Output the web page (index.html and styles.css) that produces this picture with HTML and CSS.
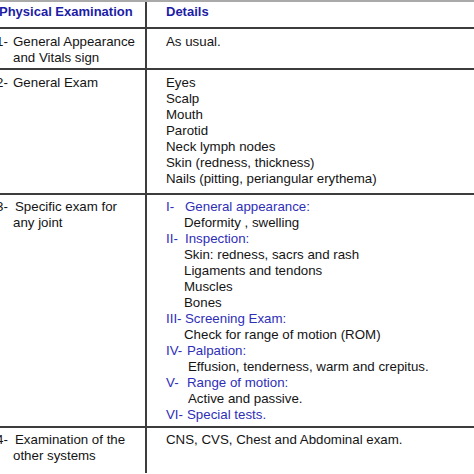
FILE: index.html
```html
<!DOCTYPE html>
<html>
<head>
<meta charset="utf-8">
<link rel="stylesheet" href="styles.css">
</head>
<body>
<div class="table">
  <div class="row head">
    <div class="cell left"><span class="hd hd-left">Physical Examination</span></div>
    <div class="cell right"><span class="hd">Details</span></div>
  </div>
  <div class="row r1">
    <div class="cell left"><div class="item"><span class="num">1-</span>General Appearance and Vitals sign</div></div>
    <div class="cell right"><div>As usual.</div></div>
  </div>
  <div class="row r2">
    <div class="cell left"><div class="item"><span class="num">2-</span>General Exam</div></div>
    <div class="cell right">
      <div>Eyes</div>
      <div>Scalp</div>
      <div>Mouth</div>
      <div>Parotid</div>
      <div>Neck lymph nodes</div>
      <div>Skin (redness, thickness)</div>
      <div>Nails (pitting, periangular erythema)</div>
    </div>
  </div>
  <div class="row r3">
    <div class="cell left"><div class="item"><span class="num wide">3-</span>Specific exam for any joint</div></div>
    <div class="cell right">
      <div class="sec"><span class="rn">I-</span>General appearance:</div>
      <div class="sub">Deformity , swelling</div>
      <div class="sec"><span class="rn">II-</span>Inspection:</div>
      <div class="sub">Skin: redness, sacrs and rash</div>
      <div class="sub">Ligaments and tendons</div>
      <div class="sub">Muscles</div>
      <div class="sub">Bones</div>
      <div class="sec"><span class="rn">III-</span>Screening Exam:</div>
      <div class="sub">Check for range of motion (ROM)</div>
      <div class="sec"><span class="rn rn2">IV-</span>Palpation:</div>
      <div class="sub sub2">Effusion, tenderness, warm and crepitus.</div>
      <div class="sec"><span class="rn rn2">V-</span>Range of motion:</div>
      <div class="sub sub2">Active and passive.</div>
      <div class="sec"><span class="rn rn2">VI-</span>Special tests.</div>
    </div>
  </div>
  <div class="row r4">
    <div class="cell left"><div class="item"><span class="num wide">4-</span>Examination of the other systems</div></div>
    <div class="cell right"><div>CNS, CVS, Chest and Abdominal exam.</div></div>
  </div>
</div>
</body>
</html>
```

FILE: styles.css
```css
html, body {
  margin: 0;
  padding: 0;
  background: #ffffff;
  overflow: hidden;
}
body {
  width: 474px;
  height: 474px;
  font-family: "Liberation Sans", Arial, sans-serif;
  font-size: 13.3px;
  line-height: 16px;
  color: #141414;
}
.table {
  border-top: 2px solid #a9a9a9;
}
.row {
  display: grid;
  grid-template-columns: 147px 1fr;
  border-bottom: 2px solid #3c3c3c;
}
.r4 { border-bottom: none; height: 45px; }
.cell.left {
  border-right: 2px solid #3c3c3c;
}
.cell.right {
  padding-left: 19px;
}
.head .cell { padding-top: 2px; padding-bottom: 7px; }
.r1 .cell { padding-top: 5px; padding-bottom: 2px; }
.r2 .cell { padding-top: 5px; padding-bottom: 6px; }
.r3 .cell { padding-top: 4px; padding-bottom: 3px; }
.r4 .cell { padding-top: 4px; }
.hd {
  font-weight: bold;
  font-size: 13px;
  color: #1c1ca6;
}
.hd-left { margin-left: -1px; }
.item {
  padding-left: 13px;
  padding-right: 8px;
}
.num {
  display: inline-block;
  width: 17px;
  margin-left: -17px;
}
.num.wide { width: 19px; }
.sec { color: #2e2eb8; }
.rn {
  display: inline-block;
  width: 19px;
}
.rn2 { width: 21px; }
.sub { padding-left: 18px; }
.sub2 { padding-left: 22px; }
```
